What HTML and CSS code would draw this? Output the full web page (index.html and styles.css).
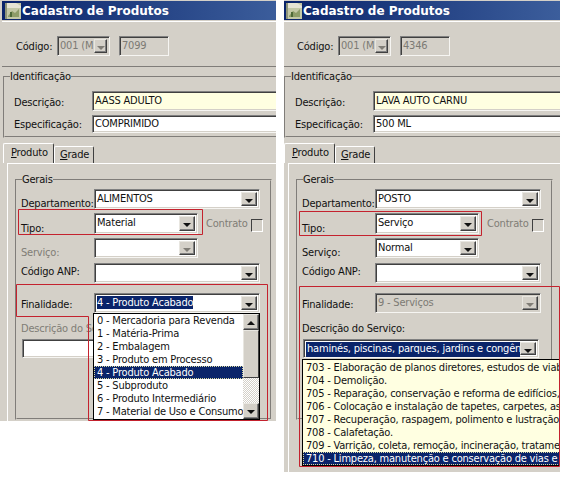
FILE: index.html
```html
<!DOCTYPE html>
<html lang="pt">
<head>
<meta charset="utf-8">
<title>Cadastro de Produtos</title>
<link rel="stylesheet" href="styles.css">
</head>
<body>
<div class="canvas">
  <section class="win win-a">
    <div class="sheet">
    <header class="title"><svg class="ico" viewBox="0 0 16 16"><rect width="16" height="16" fill="#c3c8a6"/><path d="M0 0h11l5 3v2H0z" fill="#e6e4d4"/><path d="M0 0h2v16H0z" fill="#8e9478"/><path d="M3 13l4-5 3 2 4-4v8H3z" fill="#8d9c68"/><rect x="5" y="9" width="2" height="5" fill="#4f6a38"/></svg>Cadastro de Produtos</header>
    <div class="top">
      <span class="lbl code-lbl">Código:</span>
      <div class="ctl combo off w-code"><span class="val">001 (M</span><i class="btn"></i></div>
      <div class="ctl off w-num"><span class="val">7099</span></div>
    </div>
    <fieldset class="ident">
      <legend>Identificação</legend>
      <div class="row r-desc"><span class="lbl l-ident">Descrição:</span><div class="ctl cream w-wide"><span class="val">AASS ADULTO</span></div></div>
      <div class="row r-spec"><span class="lbl l-ident">Especificação:</span><div class="ctl w-wide"><span class="val">COMPRIMIDO</span></div></div>
    </fieldset>
    <nav class="tabs"><span class="tab on"><u>P</u>roduto</span><span class="tab"><u>G</u>rade</span></nav>
    <div class="pane">
      <fieldset class="gerais">
        <legend>Gerais</legend>
        <div class="row r-dep"><span class="lbl">Departamento:</span><div class="ctl combo w-full"><span class="val">ALIMENTOS</span><i class="btn"></i></div></div>
        <div class="row r-tipo"><span class="lbl">Tipo:</span><div class="ctl combo w-mid"><span class="val">Material</span><i class="btn"></i></div><span class="lbl dim contrato">Contrato</span><i class="check"></i></div>
        <div class="row r-serv"><span class="lbl dim">Serviço:</span><div class="ctl combo w-mid"><i class="btn off-btn"></i></div></div>
        <div class="row r-anp"><span class="lbl">Código ANP:</span><div class="ctl combo w-full"><i class="btn"></i></div></div>
        <div class="row r-fin"><span class="lbl">Finalidade:</span><div class="ctl combo w-full"><span class="val"><mark class="sel">4 - Produto Acabado</mark></span><i class="btn"></i></div></div>
        <div class="lbl dim stack">Descrição do Serviço:</div>
        <div class="ctl w-desc"></div>
      </fieldset>
    </div>
    <div class="drop drop-a">
      <ul class="items">
        <li>0 - Mercadoria para Revenda</li>
        <li>1 - Matéria-Prima</li>
        <li>2 - Embalagem</li>
        <li>3 - Produto em Processo</li>
        <li class="hit">4 - Produto Acabado</li>
        <li>5 - Subproduto</li>
        <li>6 - Produto Intermediário</li>
        <li>7 - Material de Uso e Consumo</li>
      </ul>
      <div class="sbar"><i class="btn up"></i><i class="thumb"></i><i class="track"></i><i class="btn"></i></div>
    </div>
    </div>
  </section>

  <section class="win win-b">
    <div class="sheet">
    <header class="title"><svg class="ico" viewBox="0 0 16 16"><rect width="16" height="16" fill="#c3c8a6"/><path d="M0 0h11l5 3v2H0z" fill="#e6e4d4"/><path d="M0 0h2v16H0z" fill="#8e9478"/><path d="M3 13l4-5 3 2 4-4v8H3z" fill="#8d9c68"/><rect x="5" y="9" width="2" height="5" fill="#4f6a38"/></svg>Cadastro de Produtos</header>
    <div class="top">
      <span class="lbl code-lbl">Código:</span>
      <div class="ctl combo off w-code"><span class="val">001 (M</span><i class="btn"></i></div>
      <div class="ctl off w-num"><span class="val">4346</span></div>
    </div>
    <fieldset class="ident">
      <legend>Identificação</legend>
      <div class="row r-desc"><span class="lbl l-ident">Descrição:</span><div class="ctl cream w-wide"><span class="val">LAVA AUTO CARNU</span></div></div>
      <div class="row r-spec"><span class="lbl l-ident">Especificação:</span><div class="ctl w-wide"><span class="val">500 ML</span></div></div>
    </fieldset>
    <nav class="tabs"><span class="tab on"><u>P</u>roduto</span><span class="tab"><u>G</u>rade</span></nav>
    <div class="pane">
      <fieldset class="gerais">
        <legend>Gerais</legend>
        <div class="row r-dep"><span class="lbl">Departamento:</span><div class="ctl combo w-full"><span class="val">POSTO</span><i class="btn"></i></div></div>
        <div class="row r-tipo"><span class="lbl">Tipo:</span><div class="ctl combo w-mid"><span class="val">Serviço</span><i class="btn"></i></div><span class="lbl dim contrato">Contrato</span><i class="check"></i></div>
        <div class="row r-serv"><span class="lbl">Serviço:</span><div class="ctl combo w-mid"><span class="val">Normal</span><i class="btn"></i></div></div>
        <div class="row r-anp"><span class="lbl">Código ANP:</span><div class="ctl combo w-full"><i class="btn"></i></div></div>
        <div class="row r-fin"><span class="lbl">Finalidade:</span><div class="ctl combo off w-full"><span class="val">9 - Serviços</span><i class="btn"></i></div></div>
        <div class="lbl stack">Descrição do Serviço:</div>
        <div class="ctl combo w-svc"><span class="val clip">haminés, piscinas, parques, jardins e congêneres</span><i class="btn"></i></div>
      </fieldset>
    </div>
    <div class="drop drop-b">
      <ul class="items">
        <li>703 - Elaboração de planos diretores, estudos de viabilidade</li>
        <li>704 - Demolição.</li>
        <li>705 - Reparação, conservação e reforma de edifícios, estradas</li>
        <li>706 - Colocação e instalação de tapetes, carpetes, assoalhos</li>
        <li>707 - Recuperação, raspagem, polimento e lustração de pisos</li>
        <li>708 - Calafetação.</li>
        <li>709 - Varrição, coleta, remoção, incineração, tratamento</li>
        <li class="hit">710 - Limpeza, manutenção e conservação de vias e logradouros</li>
      </ul>
    </div>
    </div>
  </section>

  <svg class="marks" viewBox="0 0 565 477" width="565" height="477" fill="none" stroke="#c4222e">
    <path d="M18.500 209.500H202.500V234.500H18.500Z"/>
    <path d="M16.500 284.500H267.500V420.500H88.500V316.500H16.500Z"/>
    <path d="M299.500 211.500H481.500V235.500H299.500Z"/>
    <path d="M299.500 286.500H559.500V466.500H299.500Z"/>
  </svg>
</div>
</body>
</html>
```

FILE: styles.css
```css
* { box-sizing: border-box; }
html, body { margin: 0; background: #fff; }
.canvas { position: relative; width: 565px; height: 477px; overflow: hidden; font: 11px/14px "DejaVu Sans Condensed", Roboto, "Liberation Sans", sans-serif; letter-spacing: -.2px; color: #111; }
.win { position: absolute; top: 0; width: 276px; overflow: hidden; background: #d4d0c8; }
.win-a { left: 0; height: 421px; }
.win-b { left: 284px; height: 472px; }
.sheet { position: relative; width: 280px; height: 100%; }
.win-b .sheet { margin-left: -3px; }
.marks { position: absolute; left: 0; top: 0; pointer-events: none; }

.title { height: 19px; margin: 1px 0 0 2px; padding-left: 3px; display: flex; align-items: center; gap: 1px; background: linear-gradient(90deg, #0a246a, #3c5e9c); color: #fff; font: bold 12px "DejaVu Sans", sans-serif; letter-spacing: 0; white-space: nowrap; }
.ico { width: 16px; height: 16px; flex: none; }

.top { height: 47px; margin: 1px 0 0 2px; padding: 14px 0 0 14px; display: flex; gap: 9px; border-top: 1px solid #fff; border-bottom: 2px groove #d4d0c8; }
.code-lbl { width: 32px; min-width: 0; padding-top: 4px; }

.lbl { white-space: nowrap; }
.dim { color: #807d76; }

.ctl { position: relative; height: 20px; background: #fff; border: 1px solid; border-color: #808080 #f6f5f2 #f6f5f2 #808080; box-shadow: inset 1px 1px 0 #404040, inset -1px -1px 0 #d4d0c8; flex: none; }
.val { display: block; padding: 2px 0 0 2px; white-space: nowrap; overflow: hidden; }
.cream { background: #ffffe1; }
.off { background: #d4d0c8; color: #7c7a74; }
.w-code { width: 53px; }
.w-num { width: 50px; }
.w-wide { width: 200px; }
.w-full { width: 166px; }
.w-mid { width: 104px; }
.w-desc { width: 120px; height: 19px; margin-top: 3px; }
.w-svc { width: 236px; height: 19px; margin-top: 3px; }

.combo .val { margin-right: 18px; }
.btn { position: absolute; right: 2px; top: 2px; bottom: 2px; width: 16px; background: #d4d0c8; border: 1px solid; border-color: #e8e6e0 #404040 #404040 #e8e6e0; box-shadow: inset -1px -1px 0 #808080; display: block; }
.btn::after { content: ""; position: absolute; left: 3px; top: 6px; border: 4px solid transparent; border-top: 4px solid #111; border-bottom: 0; }
.off .btn::after, .off-btn::after { border-top-color: #807d76; }
.w-code .val { margin-right: 14px; }
.w-code .btn { width: 13px; }
.w-code .btn::after { left: 2px; }
.sel { background: #0a246a; color: #fff; }
.combo .clip { height: 15px; margin: 2px 18px 0 2px; padding: 0 0 0 1px; background: #0a246a; color: #fff; }

fieldset { margin: 0; padding: 0; min-width: 0; border: 2px groove #d4d0c8; }
legend { padding: 0; margin-left: 5px; line-height: 13px; }
.ident { width: 290px; height: 68px; margin: 2px 0 0 3px; border-right: 0; }
.row { display: flex; align-items: flex-end; }
.row .lbl { flex: none; width: 73px; min-width: 0; }
.row .l-ident { width: 78px; padding-bottom: 1px; }
.r-desc { margin: 8px 0 0 9px; }
.r-spec { margin: 4px 0 0 9px; }
.r-spec .l-ident { padding-bottom: 1px; }
.r-spec .ctl { height: 18px; }
.r-spec .val { padding-top: 1px; }

.tabs { display: flex; align-items: flex-end; height: 20px; margin: 5px 0 0 3px; }
.tab { width: 40px; height: 17px; padding: 1px 0 0 5px; border: 1px solid #fff; border-bottom: 0; border-right-color: #404040; border-radius: 2px 2px 0 0; }
.tab.on { width: 51px; height: 20px; padding: 2px 0 0 7px; }

.pane { height: 258px; margin-left: 7px; padding: 9px 6px 0 7px; border: 1px solid #fff; border-width: 1px 0 0 1px; }
.win-b .pane { height: 310px; }
.gerais { width: 257px; height: 247px; }
.r-dep { margin: 3px 0 0 4px; height: 20px; }
.r-tipo { margin: 4px 0 0 4px; height: 21px; }
.r-serv { margin: 4px 0 0 4px; height: 20px; }
.r-anp { margin: 5px 0 0 4px; height: 20px; }
.r-fin { margin: 10px 0 0 4px; height: 20px; }
.r-dep .lbl, .r-tipo > .lbl:first-child { margin-bottom: -2px; }
.r-serv .lbl { margin-bottom: -2px; }
.r-anp .lbl { padding-bottom: 4px; }
.r-fin .lbl { padding-bottom: 1px; }
.r-tipo .ctl { height: 21px; }
.row .contrato { width: auto; margin-left: 8px; padding-bottom: 3px; }
.check { width: 12px; height: 13px; margin: 0 0 2px 3px; flex: none; border: 1px solid; border-color: #404040 #fff #fff #404040; }
.stack { margin: 9px 0 0 4px; }
.gerais > .ctl { margin-left: 5px; }

.drop { position: absolute; display: flex; border: 1px solid #000; background: #fff; overflow: hidden; }
.drop-a { left: 93px; top: 312px; width: 167px; height: 107px; }
.drop-b { left: 21px; top: 358px; width: 259px; height: 107px; background: #ffffe1; }
.items { flex: 1; min-width: 0; margin: 0; padding: 0; list-style: none; }
.drop-b .items { padding-top: 1px; }
.items li { height: 13px; padding-left: 3px; line-height: 13px; white-space: nowrap; }
.items .hit { background: #0a246a; color: #fff; outline: 1px dotted #d8d8a0; outline-offset: -1px; }
.sbar { flex: none; width: 16px; display: flex; flex-direction: column; }
.sbar .btn { position: relative; right: auto; top: auto; bottom: auto; height: 16px; flex: none; }
.sbar .up::after { border-top: 0; border-bottom: 4px solid #111; }
.thumb { height: 48px; flex: none; background: #d4d0c8; border: 1px solid; border-color: #e8e6e0 #404040 #404040 #e8e6e0; }
.track { flex: 1; background: repeating-conic-gradient(#fff 0 25%, #d4d0c8 0 50%) 0 0 / 2px 2px; }
```
